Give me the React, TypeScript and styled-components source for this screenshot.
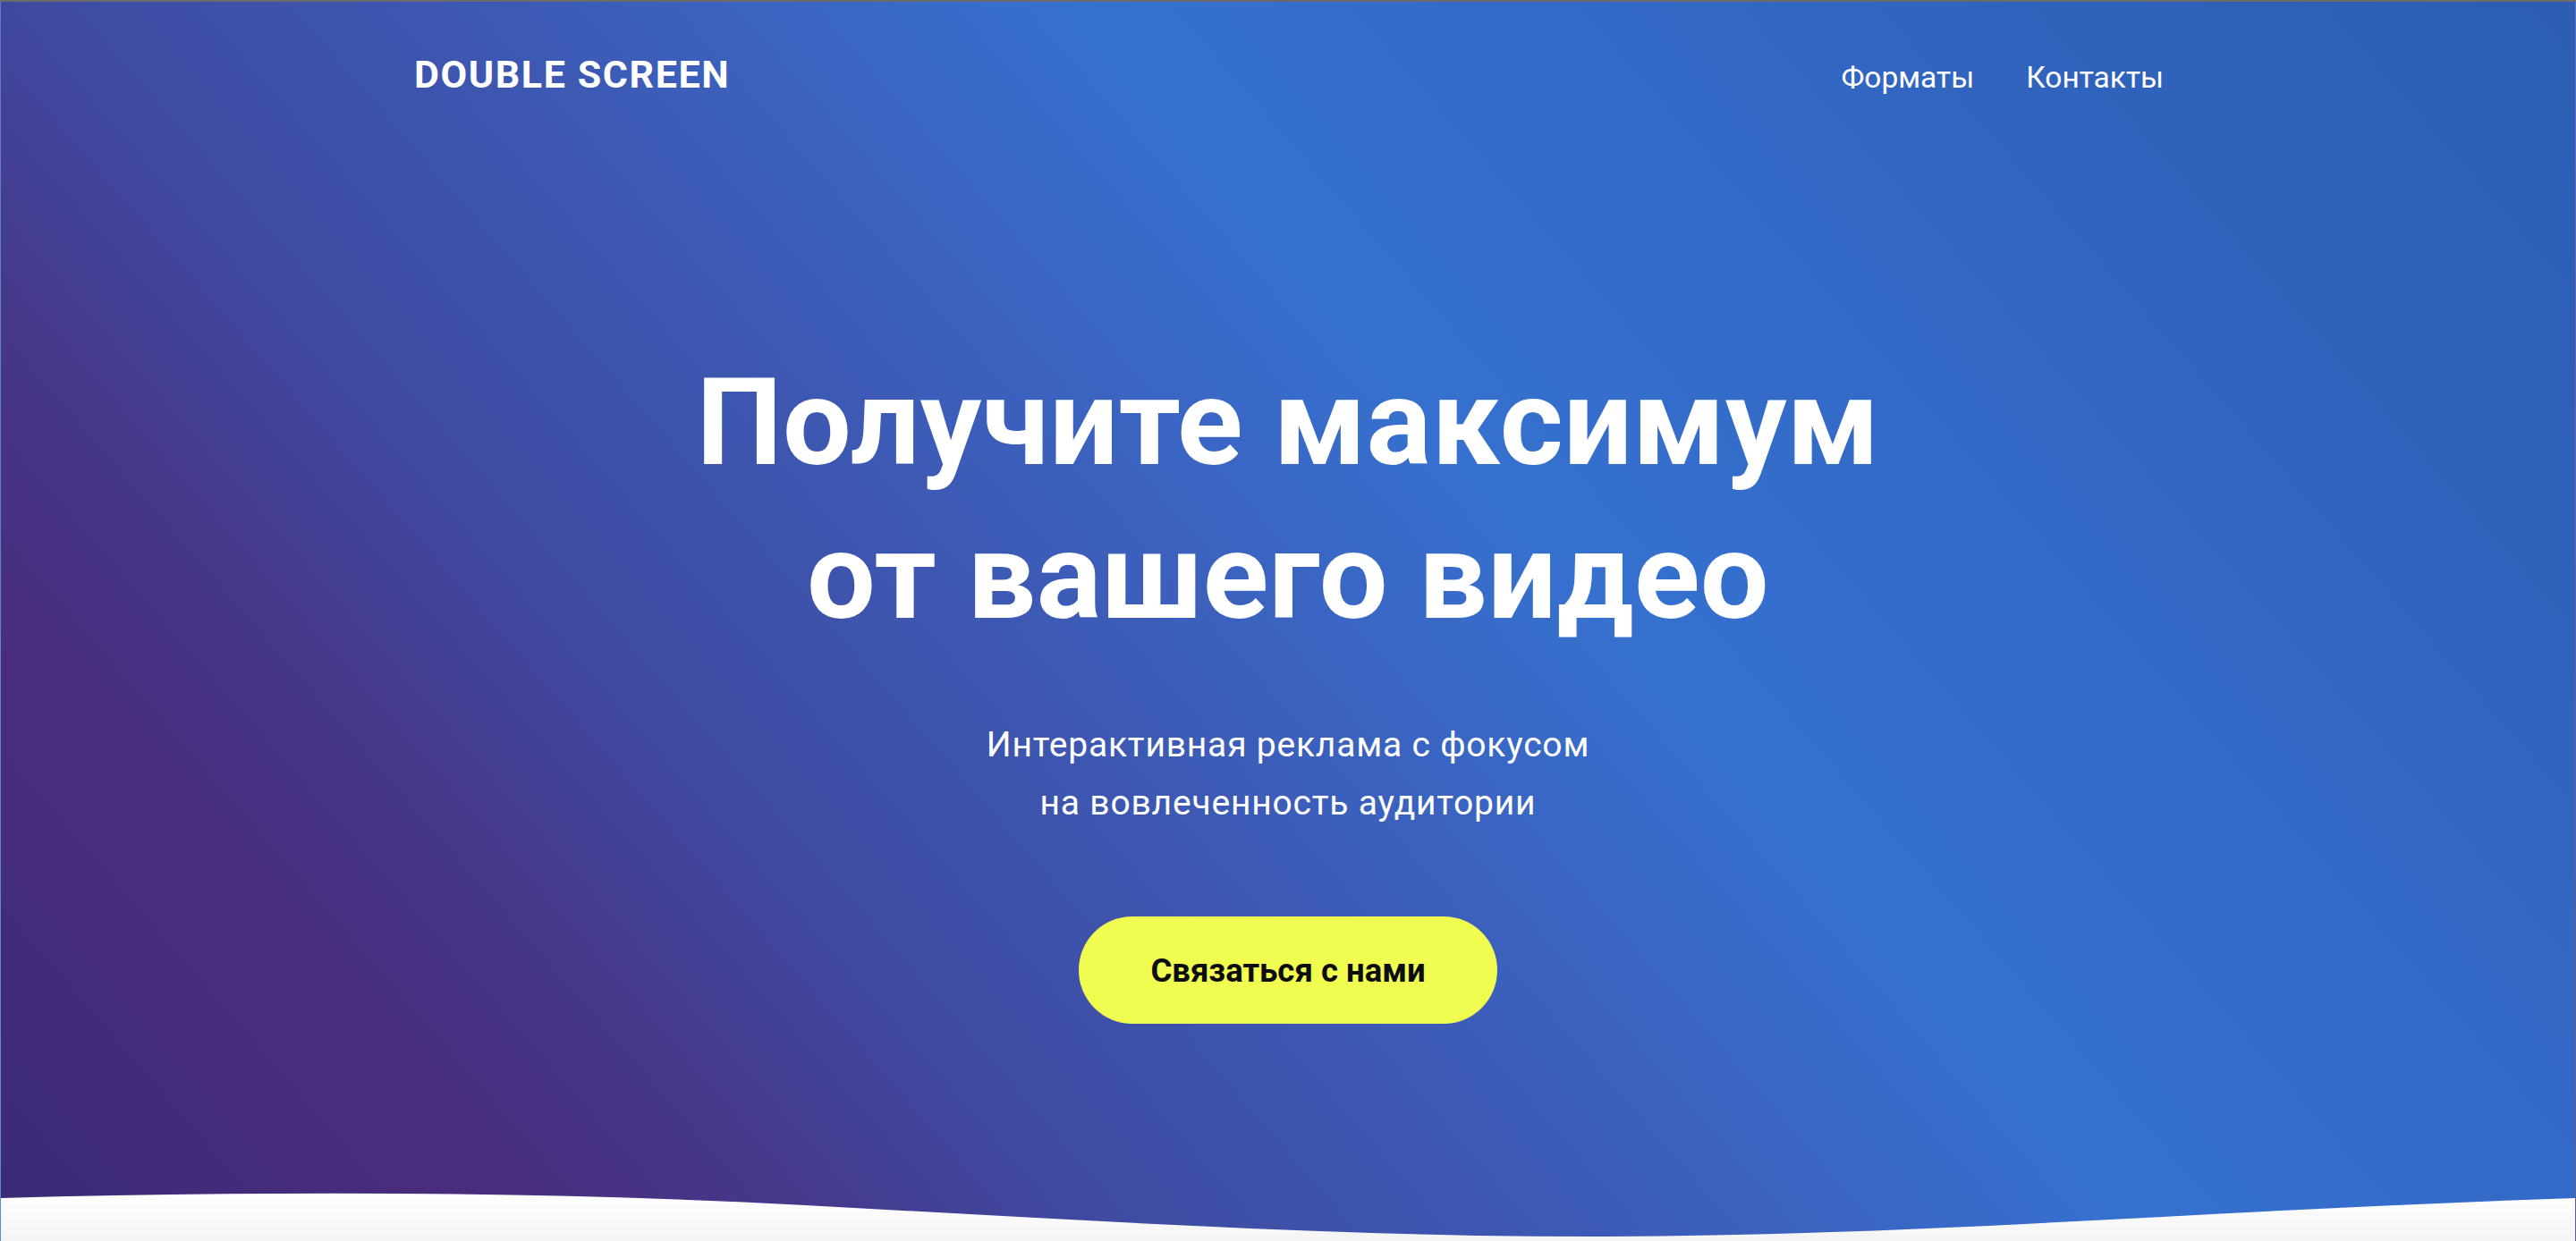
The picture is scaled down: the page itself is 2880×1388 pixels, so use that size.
import React from "react";
import styled, { createGlobalStyle } from "styled-components";

const GlobalStyle = createGlobalStyle`
  html, body {
    margin: 0;
    padding: 0;
    background: #ffffff;
  }
  body {
    font-family: Roboto, "Noto Sans", "Liberation Sans", sans-serif;
    -webkit-font-smoothing: antialiased;
  }
  * { box-sizing: border-box; }
`;

const Page = styled.div`
  min-height: 1388px;
  border-top: 2px solid #6b6b6b;
  background: linear-gradient(to bottom, #ffffff 0%, #f4f4f4 100%);
`;

const Hero = styled.section`
  position: relative;
  height: 1386px;
  overflow: hidden;
  border-left: 1px solid rgba(255, 255, 255, 0.22);
  border-right: 1px solid rgba(255, 255, 255, 0.22);
  background: linear-gradient(
    49deg,
    #3a2b76 0%,
    #492d7c 14%,
    #46378a 22%,
    #3f4ba2 31%,
    #3d58b2 42%,
    #3a66c4 52%,
    #3671cf 59%,
    #3369c7 72%,
    #2f62bb 86%,
    #2c5db3 100%
  );
  display: flex;
  flex-direction: column;
`;

const Header = styled.header`
  width: 1958px;
  margin: 0 auto;
  padding-top: 56px;
  display: flex;
  align-items: baseline;
  justify-content: space-between;
`;

const Logo = styled.a`
  color: #ffffff;
  font-size: 43px;
  font-weight: 700;
  letter-spacing: 1.6px;
  margin-left: 2px;
  text-decoration: none;
`;

const Nav = styled.nav`
  display: flex;
  align-items: baseline;
  gap: 58px;
`;

const NavLink = styled.a`
  color: #ffffff;
  font-size: 33.5px;
  font-weight: 400;
  text-decoration: none;
`;

const Main = styled.main`
  display: flex;
  flex-direction: column;
  align-items: center;
  text-align: center;
  padding-top: 279px;
`;

const Title = styled.h1`
  margin: 0;
  color: #ffffff;
  font-size: 136px;
  font-weight: 700;
  line-height: 172px;
  letter-spacing: 0.4px;
`;

const Subtitle = styled.p`
  margin: 70px 0 0;
  color: #ffffff;
  font-size: 39px;
  font-weight: 400;
  line-height: 65px;
  letter-spacing: 0.8px;
`;

const CtaButton = styled.button`
  margin-top: 94px;
  width: 468px;
  height: 120px;
  border: none;
  border-radius: 60px;
  background: #f0fc50;
  color: #0d0d0d;
  font-family: Roboto, "Noto Sans", "Liberation Sans", sans-serif;
  font-size: 36.5px;
  font-weight: 700;
  cursor: pointer;
`;

const Wave = styled.svg`
  position: absolute;
  left: 0;
  bottom: 0;
  width: 100%;
  height: 60px;
  display: block;
`;

export default function App() {
  return (
    <>
      <GlobalStyle />
      <Page>
        <Hero>
          <Header>
            <Logo href="#">DOUBLE SCREEN</Logo>
            <Nav>
              <NavLink href="#">Форматы</NavLink>
              <NavLink href="#">Контакты</NavLink>
            </Nav>
          </Header>
          <Main>
            <Title>
              Получите максимум
              <br />
              от вашего видео
            </Title>
            <Subtitle>
              Интерактивная реклама с фокусом
              <br />
              на вовлеченность аудитории
            </Subtitle>
            <CtaButton type="button">Связаться с нами</CtaButton>
          </Main>
          <Wave viewBox="0 0 2880 60" preserveAspectRatio="none" aria-hidden="true">
            <defs>
              <linearGradient id="waveFill" x1="0" y1="0" x2="0" y2="1">
                <stop offset="0%" stopColor="#ffffff" />
                <stop offset="100%" stopColor="#f4f4f4" />
              </linearGradient>
            </defs>
            <path
              d="M0 12 C 300 4, 600 4, 900 20 C 1200 36, 1500 56, 1800 55 C 2150 54, 2500 24, 2880 12 L 2880 60 L 0 60 Z"
              fill="url(#waveFill)"
            />
          </Wave>
        </Hero>
      </Page>
    </>
  );
}
